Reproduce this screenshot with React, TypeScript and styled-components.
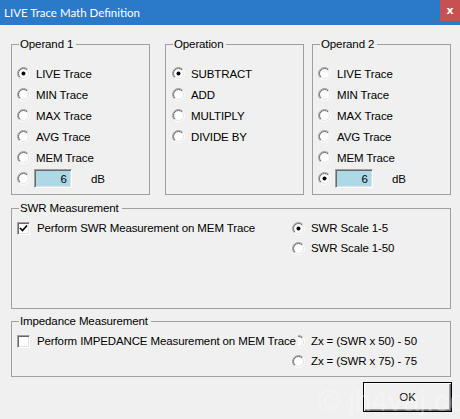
import React, { useId } from "react";
import styled, { createGlobalStyle } from "styled-components";

const Global = createGlobalStyle`
  html, body { margin: 0; padding: 0; background: #f0f0f0; }
  * { box-sizing: border-box; }
`;

const UI_FONT = `"Liberation Sans", Arial, sans-serif`;

const Window = styled.div`
  position: relative;
  width: 460px;
  height: 419px;
  background: #f0f0f0;
  overflow: hidden;
  font-family: ${UI_FONT};
  font-size: 11.5px;
  letter-spacing: -0.12px;
  color: #000;
`;

const TitleBar = styled.div`
  height: 25px;
  background: #2b79c9;
  display: flex;
  align-items: flex-start;
  justify-content: space-between;
  padding-left: 4px;
`;

const TitleText = styled.div`
  font-family: Lato, "Noto Sans", sans-serif;
  font-size: 11.5px;
  letter-spacing: 0;
  color: #ffffff;
  line-height: 25px;
`;

const CloseButton = styled.div`
  width: 20px;
  height: 21px;
  background: #c75050;
  color: #ffffff;
  font-family: "DejaVu Sans", sans-serif;
  font-weight: bold;
  font-size: 11px;
  display: flex;
  align-items: center;
  justify-content: center;
  padding-bottom: 1px;
`;

const Body = styled.div`
  padding: 12px 9px 0 11px;
  display: flex;
  flex-direction: column;
`;

const TopRow = styled.div`
  display: flex;
`;

const Group = styled.fieldset<{ $w?: number; $h: number; $ml?: number; $mt?: number; $pt: number }>`
  margin: ${(p) => p.$mt ?? 0}px 0 0 ${(p) => p.$ml ?? 0}px;
  width: ${(p) => (p.$w ? `${p.$w}px` : "auto")};
  height: ${(p) => p.$h}px;
  border: 1px solid #a0a0a0;
  padding: ${(p) => p.$pt}px 5px 0 5px;
  min-width: 0;
`;

const Legend = styled.legend`
  margin-left: 2px;
  padding: 0 3px 0 1px;
  line-height: 14px;
  height: 14px;
`;

const Stack = styled.div<{ $ml?: number }>`
  display: flex;
  flex-direction: column;
  margin-left: ${(p) => p.$ml ?? 0}px;
`;

const OptionRow = styled.label<{ $h?: number }>`
  display: flex;
  align-items: center;
  height: ${(p) => p.$h ?? 21}px;
  white-space: nowrap;
`;

const OptionText = styled.span`
  margin-left: 6px;
`;

const MeasureGrid = styled.div`
  display: grid;
  grid-template-columns: 275px 1fr;
  grid-auto-rows: 20px;
`;

const CheckLabel = styled.label<{ $opaque?: boolean }>`
  display: flex;
  align-items: center;
  white-space: nowrap;
  position: relative;
  z-index: 1;
  justify-self: start;
  background: ${(p) => (p.$opaque ? "#f0f0f0" : "transparent")};
  padding-right: 2px;
`;

const CheckText = styled.span`
  margin-left: 7px;
`;

const Cell = styled.div<{ $col: number; $row: number }>`
  grid-column: ${(p) => p.$col};
  grid-row: ${(p) => p.$row};
  display: flex;
  align-items: center;
`;

const RadioSvg = styled.svg`
  flex: none;
  width: 13px;
  height: 13px;
  display: block;
`;

const CheckBox = styled.span`
  flex: none;
  width: 13px;
  height: 13px;
  background: #ffffff;
  border-top: 1px solid #a0a0a0;
  border-left: 1px solid #a0a0a0;
  border-right: 1px solid #ffffff;
  border-bottom: 1px solid #ffffff;
  box-shadow: inset 1px 1px 0 #696969, inset -1px -1px 0 #e3e3e3;
  display: flex;
  align-items: center;
  justify-content: center;
`;

const ValueInput = styled.input`
  width: 38px;
  height: 19px;
  margin-left: 4px;
  background: #add8e6;
  border-top: 1px solid #a0a0a0;
  border-left: 1px solid #a0a0a0;
  border-right: 1px solid #ffffff;
  border-bottom: 1px solid #ffffff;
  box-shadow: inset 1px 1px 0 #696969, inset -1px -1px 0 #e3e3e3;
  font-family: ${UI_FONT};
  font-size: 11.5px;
  color: #000;
  text-align: right;
  padding: 0 4px 0 0;
  outline: none;
`;

const Unit = styled.span`
  margin-left: 19px;
`;

const Footer = styled.div`
  display: flex;
  justify-content: flex-end;
  margin-top: 5px;
  margin-right: -1px;
`;

const OkButton = styled.button`
  width: 89px;
  height: 30px;
  background: #f0f0f0;
  border: 1px solid #000;
  box-shadow: inset 1px 1px 0 #ffffff, inset -1px -1px 0 #696969, inset -2px -2px 0 #a0a0a0;
  font-family: ${UI_FONT};
  font-size: 11.5px;
  color: #000;
  padding: 0;
`;

const Watermark = styled.span`
  position: absolute;
  left: 318px;
  top: 384px;
  font-family: "Liberation Sans", sans-serif;
  font-size: 30px;
  color: rgba(255, 255, 255, 0.3);
  white-space: nowrap;
  pointer-events: none;
`;

function Radio({ checked }: { checked?: boolean }) {
  const id = useId().replace(/:/g, "");
  return (
    <RadioSvg viewBox="0 0 13 13">
      <defs>
        <linearGradient id={`o${id}`} x1="0" y1="0" x2="1" y2="1">
          <stop offset="0.45" stopColor="#a0a0a0" />
          <stop offset="0.55" stopColor="#ffffff" />
        </linearGradient>
        <linearGradient id={`i${id}`} x1="0" y1="0" x2="1" y2="1">
          <stop offset="0.45" stopColor="#696969" />
          <stop offset="0.55" stopColor="#e3e3e3" />
        </linearGradient>
      </defs>
      <circle cx="6.5" cy="6.5" r="6" fill="none" stroke={`url(#o${id})`} strokeWidth="1" />
      <circle cx="6.5" cy="6.5" r="5" fill="#ffffff" stroke={`url(#i${id})`} strokeWidth="1" />
      {checked && <circle cx="6.5" cy="6.5" r="2" fill="#000" />}
    </RadioSvg>
  );
}

function Check({ checked }: { checked?: boolean }) {
  return (
    <CheckBox>
      {checked && (
        <svg width="9" height="9" viewBox="0 0 9 9">
          <path d="M1 4 L3.5 6.5 L8 1.5" fill="none" stroke="#000" strokeWidth="1.7" />
        </svg>
      )}
    </CheckBox>
  );
}

const traces = ["LIVE Trace", "MIN Trace", "MAX Trace", "AVG Trace", "MEM Trace"];
const ops = ["SUBTRACT", "ADD", "MULTIPLY", "DIVIDE BY"];

function OperandGroup({ title, selected, ml }: { title: string; selected: number; ml?: number }) {
  return (
    <Group $w={139} $h={158} $ml={ml} $pt={12}>
      <Legend>{title}</Legend>
      <Stack>
        {traces.map((t, i) => (
          <OptionRow key={t}>
            <Radio checked={selected === i} />
            <OptionText>{t}</OptionText>
          </OptionRow>
        ))}
        <OptionRow>
          <Radio checked={selected === 5} />
          <ValueInput readOnly value="6" />
          <Unit>dB</Unit>
        </OptionRow>
      </Stack>
    </Group>
  );
}

export default function App() {
  return (
    <>
      <Global />
      <Window>
        <TitleBar>
          <TitleText>LIVE Trace Math Definition</TitleText>
          <CloseButton>x</CloseButton>
        </TitleBar>
        <Body>
          <TopRow>
            <OperandGroup title="Operand 1" selected={0} />
            <Group $w={139} $h={158} $ml={15} $pt={12}>
              <Legend>Operation</Legend>
              <Stack $ml={1}>
                {ops.map((o, i) => (
                  <OptionRow key={o}>
                    <Radio checked={i === 0} />
                    <OptionText>{o}</OptionText>
                  </OptionRow>
                ))}
              </Stack>
            </Group>
            <OperandGroup title="Operand 2" selected={5} ml={8} />
          </TopRow>

          <Group $h={108} $pt={3} $mt={6}>
            <Legend>SWR Measurement</Legend>
            <MeasureGrid>
              <Cell $col={1} $row={1}>
                <CheckLabel>
                  <Check checked />
                  <CheckText>Perform SWR Measurement on MEM Trace</CheckText>
                </CheckLabel>
              </Cell>
              <Cell $col={2} $row={1}>
                <Radio checked />
                <OptionText>SWR Scale 1-5</OptionText>
              </Cell>
              <Cell $col={2} $row={2}>
                <Radio />
                <OptionText>SWR Scale 1-50</OptionText>
              </Cell>
            </MeasureGrid>
          </Group>

          <Group $h={63} $pt={3} $mt={5}>
            <Legend>Impedance Measurement</Legend>
            <MeasureGrid>
              <Cell $col={1} $row={1}>
                <CheckLabel $opaque>
                  <Check />
                  <CheckText>Perform IMPEDANCE Measurement on MEM Trace</CheckText>
                </CheckLabel>
              </Cell>
              <Cell $col={2} $row={1}>
                <Radio />
                <OptionText>Zx = (SWR x 50) - 50</OptionText>
              </Cell>
              <Cell $col={2} $row={2}>
                <Radio />
                <OptionText>Zx = (SWR x 75) - 75</OptionText>
              </Cell>
            </MeasureGrid>
          </Group>

          <Footer>
            <OkButton>OK</OkButton>
          </Footer>
        </Body>
        <Watermark>© jh4vaj.com</Watermark>
      </Window>
    </>
  );
}
